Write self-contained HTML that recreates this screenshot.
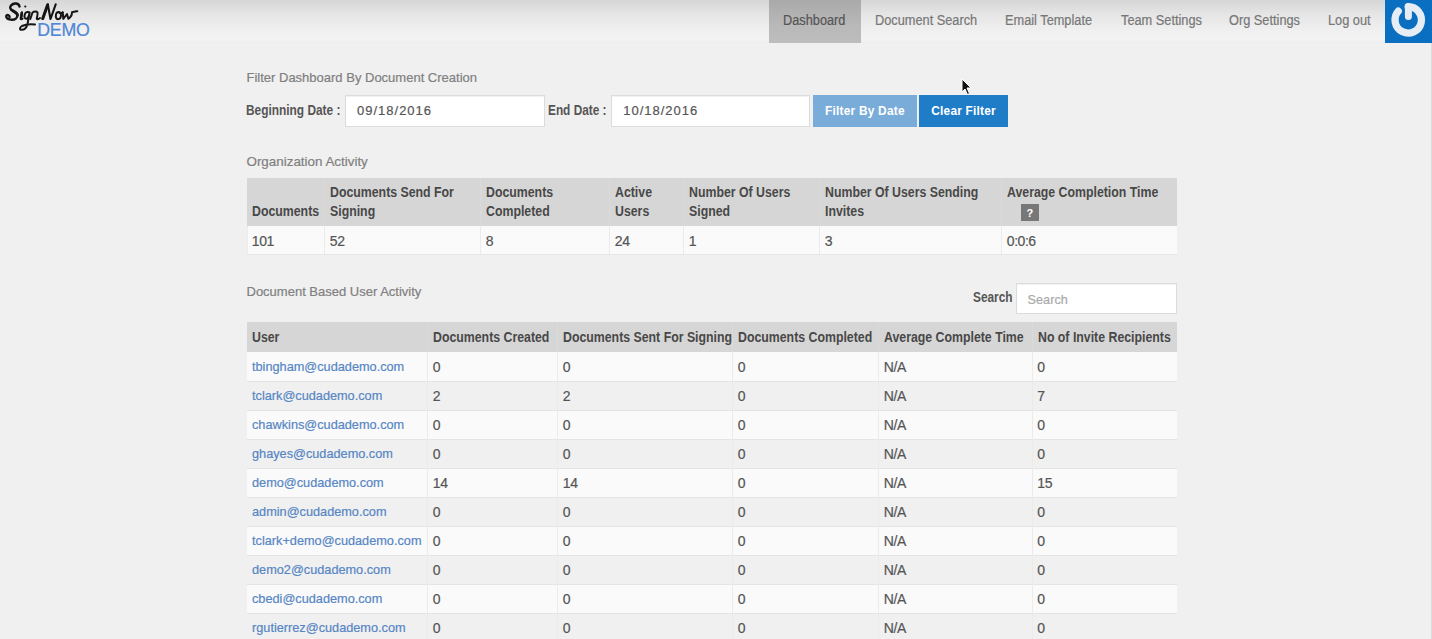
<!DOCTYPE html>
<html><head><meta charset="utf-8"><style>
html,body{margin:0;padding:0}
body{width:1432px;height:639px;overflow:hidden;background:#f0f0f0;position:relative;font-family:"Liberation Sans", sans-serif}
.t{position:absolute;white-space:nowrap;line-height:1.117;font-family:"Liberation Sans", sans-serif}
.r{position:absolute}
</style></head><body>
<div class="r" style="left:0;top:0;width:1432px;height:43px;background:linear-gradient(#d6d6d6 0%,#e6e6e6 35%,#f1f1f1 75%,#f3f3f3 90%,#eeeeee 100%)"></div>
<svg class="r" style="left:0;top:0" width="100" height="43" viewBox="0 0 100 43">
<g fill="none" stroke="#151515" stroke-linecap="round" stroke-linejoin="round">
<path d="M19.5 6.5 C19 4 17 3.3 15 3.5 C12 3.8 10 6 10.2 8 C10.5 10.5 17.5 12 17.5 15 C17.5 18 15 19.8 12 19.8 C9 19.8 6.3 18.5 6.2 16.3 C6.1 15 7.5 14.8 8.5 15.3 C9.5 15.8 9.8 17 9.5 17.2" stroke-width="2.4"/>
<path d="M22 12.3 L20.8 18.5 C20.7 19.3 21.5 19.5 22.5 18.7" stroke-width="2.0"/>
<circle cx="25.3" cy="6.5" r="1.1" fill="#151515" stroke="none"/>
<path d="M29.5 13 C28.5 11.5 26 11.8 25 13.8 C24 16 24.5 19 26.5 18.8 C28 18.6 29 16 29.7 12.5 L27.5 24 C26.8 27.5 24.5 29.7 21.5 29.8 C19.5 29.8 19.3 27.5 22 26 C25 24.5 30 24 35 24.5" stroke-width="2.0"/>
<path d="M30.3 19 L32.5 12.5 C34 11.5 36.5 11 37.5 12.5 C38 13.5 37 17 36.8 18.5 C36.7 19.5 38 19.5 40 18" stroke-width="2.0"/>
<path d="M42.5 19 L47.8 4.3 L50.5 19 L55.7 4.3" stroke-width="2.1"/>
<path d="M42.8 18.5 L47.6 5" stroke-width="3"/>
<path d="M11.5 10 C13.5 11.5 17.3 12.5 17.4 15.2" stroke-width="2.8"/>
<path d="M21.8 13 L21 18.5" stroke-width="2.6"/>
<path d="M58.5 12 C56 12 55 16 56.5 18.5 C58 20 60.5 19 61 16 C61.3 13.5 60 12 58.5 12 C60 13.5 61.5 13.5 62.8 12.5" stroke-width="2.0"/>
<path d="M62.7 12.3 L63.3 18.8 L67 14 L68.3 18.8 C70.5 17.5 72 14.5 72 12.3 C74 12 76 11.5 77.3 11.2" stroke-width="2.0"/>
</g>
</svg>
<div class="t" style="left:37.2px;top:20.69px;font-size:17.8px;font-weight:400;color:#5086d6;letter-spacing:-0.25px;-webkit-text-stroke:0.2px currentColor;">DEMO</div>
<div class="r" style="left:769px;top:0px;width:92px;height:43px;background:linear-gradient(#a9a9a9,#b9b9b9 60%,#bdbdbd);"></div>
<div class="t" style="left:783.1px;top:13.43px;font-size:14px;font-weight:400;color:#555;letter-spacing:0px;transform:scaleX(0.912);transform-origin:0 0;-webkit-text-stroke:0.2px currentColor;">Dashboard</div>
<div class="t" style="left:874.9px;top:13.43px;font-size:14px;font-weight:400;color:#777;letter-spacing:0px;transform:scaleX(0.912);transform-origin:0 0;-webkit-text-stroke:0.2px currentColor;">Document Search</div>
<div class="t" style="left:1005.4px;top:13.43px;font-size:14px;font-weight:400;color:#777;letter-spacing:0px;transform:scaleX(0.912);transform-origin:0 0;-webkit-text-stroke:0.2px currentColor;">Email Template</div>
<div class="t" style="left:1120.5px;top:13.43px;font-size:14px;font-weight:400;color:#777;letter-spacing:0px;transform:scaleX(0.912);transform-origin:0 0;-webkit-text-stroke:0.2px currentColor;">Team Settings</div>
<div class="t" style="left:1228.6999999999998px;top:13.43px;font-size:14px;font-weight:400;color:#777;letter-spacing:0px;transform:scaleX(0.912);transform-origin:0 0;-webkit-text-stroke:0.2px currentColor;">Org Settings</div>
<div class="t" style="left:1328.3px;top:13.43px;font-size:14px;font-weight:400;color:#777;letter-spacing:0px;transform:scaleX(0.912);transform-origin:0 0;-webkit-text-stroke:0.2px currentColor;">Log out</div>
<div class="r" style="left:1385px;top:0px;width:47px;height:43px;background:#0a6fc1;"></div>
<svg class="r" style="left:1385px;top:0" width="47" height="43" viewBox="0 0 47 43">
<path d="M13.3 11.2 A13.2 13.2 0 1 0 23.2 6.7" fill="none" stroke="#e6edf4" stroke-width="7.3" stroke-linecap="round"/>
<path d="M23.4 6.7 L23.4 16.5" fill="none" stroke="#e6edf4" stroke-width="7" stroke-linecap="round"/>
</svg>
<div class="r" style="left:1431px;top:43px;width:1px;height:596px;background:#dcdcdc;"></div>
<div class="t" style="left:246.5px;top:71.03px;font-size:13px;font-weight:400;color:#808080;letter-spacing:0px;-webkit-text-stroke:0.2px currentColor;">Filter Dashboard By Document Creation</div>
<div class="t" style="left:246.4px;top:102.63px;font-size:14px;font-weight:700;color:#555;letter-spacing:0px;transform:scaleX(0.849);transform-origin:0 0;">Beginning Date :</div>
<div class="r" style="left:344.5px;top:95px;width:200px;height:32px;background:#fff;box-sizing:border-box;border:1px solid #dcdcdc;box-shadow:inset 0 1px 1px rgba(0,0,0,.06)"></div>
<div class="t" style="left:357px;top:104.23px;font-size:13px;font-weight:400;color:#555;letter-spacing:1px;-webkit-text-stroke:0.2px currentColor;">09/18/2016</div>
<div class="t" style="left:547.8px;top:102.63px;font-size:14px;font-weight:700;color:#555;letter-spacing:0px;transform:scaleX(0.845);transform-origin:0 0;">End Date :</div>
<div class="r" style="left:610.5px;top:95px;width:199px;height:32px;background:#fff;box-sizing:border-box;border:1px solid #dcdcdc;box-shadow:inset 0 1px 1px rgba(0,0,0,.06)"></div>
<div class="t" style="left:623.2px;top:104.23px;font-size:13px;font-weight:400;color:#555;letter-spacing:1px;-webkit-text-stroke:0.2px currentColor;">10/18/2016</div>
<div class="r" style="left:812.5px;top:95px;width:104.5px;height:31.5px;background:#79acd8;"></div>
<div class="t" style="left:825px;top:105.43px;font-size:11.9px;font-weight:700;color:#fff;letter-spacing:0.22px;">Filter By Date</div>
<div class="r" style="left:919.3px;top:95px;width:88.7px;height:31.5px;background:#1f7dc8;"></div>
<div class="t" style="left:931.3px;top:105.43px;font-size:11.9px;font-weight:700;color:#fff;letter-spacing:0.2px;">Clear Filter</div>
<svg class="r" style="left:961px;top:77.5px" width="12" height="18" viewBox="0 0 12 18">
<path d="M1 1 L1 14 L4 11 L6.5 16.5 L8.5 15.5 L6 10 L10 10 Z" fill="#111" stroke="#fff" stroke-width="1"/>
</svg>
<div class="t" style="left:246.5px;top:155.07px;font-size:13.4px;font-weight:400;color:#808080;letter-spacing:0px;-webkit-text-stroke:0.2px currentColor;">Organization Activity</div>
<div class="r" style="left:246.5px;top:178px;width:930.5px;height:48.3px;background:#d6d6d6;"></div>
<div class="r" style="left:246.5px;top:226.3px;width:930.5px;height:28.7px;background:#fafafa;box-sizing:border-box;border-bottom:1px solid #e6e6e6;border-left:1px solid #ececec"></div>
<div class="t" style="left:252.0px;top:204.33px;font-size:14px;font-weight:700;color:#484848;letter-spacing:0px;transform:scaleX(0.88);transform-origin:0 0;">Documents</div>
<div class="t" style="left:251.8px;top:234.23px;font-size:14px;font-weight:400;color:#555;letter-spacing:-0.45px;-webkit-text-stroke:0.2px currentColor;">101</div>
<div class="r" style="left:324.0px;top:226.3px;width:1px;height:28px;background:#ebebeb;"></div>
<div class="r" style="left:324.0px;top:178px;width:1px;height:48.3px;background:#dadada;"></div>
<div class="t" style="left:330.0px;top:185.43px;font-size:14px;font-weight:700;color:#484848;letter-spacing:0px;transform:scaleX(0.88);transform-origin:0 0;">Documents Send For</div>
<div class="t" style="left:330.0px;top:204.33px;font-size:14px;font-weight:700;color:#484848;letter-spacing:0px;transform:scaleX(0.88);transform-origin:0 0;">Signing</div>
<div class="t" style="left:329.8px;top:234.23px;font-size:14px;font-weight:400;color:#555;letter-spacing:-0.45px;-webkit-text-stroke:0.2px currentColor;">52</div>
<div class="r" style="left:480.0px;top:226.3px;width:1px;height:28px;background:#ebebeb;"></div>
<div class="r" style="left:480.0px;top:178px;width:1px;height:48.3px;background:#dadada;"></div>
<div class="t" style="left:486.0px;top:185.43px;font-size:14px;font-weight:700;color:#484848;letter-spacing:0px;transform:scaleX(0.88);transform-origin:0 0;">Documents</div>
<div class="t" style="left:486.0px;top:204.33px;font-size:14px;font-weight:700;color:#484848;letter-spacing:0px;transform:scaleX(0.88);transform-origin:0 0;">Completed</div>
<div class="t" style="left:485.8px;top:234.23px;font-size:14px;font-weight:400;color:#555;letter-spacing:-0.45px;-webkit-text-stroke:0.2px currentColor;">8</div>
<div class="r" style="left:609.0px;top:226.3px;width:1px;height:28px;background:#ebebeb;"></div>
<div class="r" style="left:609.0px;top:178px;width:1px;height:48.3px;background:#dadada;"></div>
<div class="t" style="left:615.0px;top:185.43px;font-size:14px;font-weight:700;color:#484848;letter-spacing:0px;transform:scaleX(0.88);transform-origin:0 0;">Active</div>
<div class="t" style="left:615.0px;top:204.33px;font-size:14px;font-weight:700;color:#484848;letter-spacing:0px;transform:scaleX(0.88);transform-origin:0 0;">Users</div>
<div class="t" style="left:614.8px;top:234.23px;font-size:14px;font-weight:400;color:#555;letter-spacing:-0.45px;-webkit-text-stroke:0.2px currentColor;">24</div>
<div class="r" style="left:683.0px;top:226.3px;width:1px;height:28px;background:#ebebeb;"></div>
<div class="r" style="left:683.0px;top:178px;width:1px;height:48.3px;background:#dadada;"></div>
<div class="t" style="left:689.0px;top:185.43px;font-size:14px;font-weight:700;color:#484848;letter-spacing:0px;transform:scaleX(0.88);transform-origin:0 0;">Number Of Users</div>
<div class="t" style="left:689.0px;top:204.33px;font-size:14px;font-weight:700;color:#484848;letter-spacing:0px;transform:scaleX(0.88);transform-origin:0 0;">Signed</div>
<div class="t" style="left:688.8px;top:234.23px;font-size:14px;font-weight:400;color:#555;letter-spacing:-0.45px;-webkit-text-stroke:0.2px currentColor;">1</div>
<div class="r" style="left:819.0px;top:226.3px;width:1px;height:28px;background:#ebebeb;"></div>
<div class="r" style="left:819.0px;top:178px;width:1px;height:48.3px;background:#dadada;"></div>
<div class="t" style="left:825.0px;top:185.43px;font-size:14px;font-weight:700;color:#484848;letter-spacing:0px;transform:scaleX(0.88);transform-origin:0 0;">Number Of Users Sending</div>
<div class="t" style="left:825.0px;top:204.33px;font-size:14px;font-weight:700;color:#484848;letter-spacing:0px;transform:scaleX(0.88);transform-origin:0 0;">Invites</div>
<div class="t" style="left:824.8px;top:234.23px;font-size:14px;font-weight:400;color:#555;letter-spacing:-0.45px;-webkit-text-stroke:0.2px currentColor;">3</div>
<div class="r" style="left:1001.0px;top:226.3px;width:1px;height:28px;background:#ebebeb;"></div>
<div class="r" style="left:1001.0px;top:178px;width:1px;height:48.3px;background:#dadada;"></div>
<div class="t" style="left:1007.0px;top:185.43px;font-size:14px;font-weight:700;color:#484848;letter-spacing:0px;transform:scaleX(0.88);transform-origin:0 0;">Average Completion Time</div>
<div class="t" style="left:1006.8px;top:234.23px;font-size:14px;font-weight:400;color:#555;letter-spacing:-0.45px;-webkit-text-stroke:0.2px currentColor;">0:0:6</div>
<div class="r" style="left:1021px;top:204px;width:18px;height:16.5px;background:#777;"></div>
<div class="t" style="left:1026.5px;top:206.54px;font-size:11px;font-weight:700;color:#fff;letter-spacing:0px;">?</div>
<div class="t" style="left:246.5px;top:285.04px;font-size:13px;font-weight:400;color:#808080;letter-spacing:0px;-webkit-text-stroke:0.2px currentColor;">Document Based User Activity</div>
<div class="t" style="left:973px;top:290.03px;font-size:14px;font-weight:700;color:#555;letter-spacing:0px;transform:scaleX(0.848);transform-origin:0 0;">Search</div>
<div class="r" style="left:1016.3px;top:283px;width:161px;height:31px;background:#fff;box-sizing:border-box;border:1px solid #dcdcdc;box-shadow:inset 0 1px 1px rgba(0,0,0,.06)"></div>
<div class="t" style="left:1027.6px;top:293.01px;font-size:12.7px;font-weight:400;color:#aaa;letter-spacing:0px;-webkit-text-stroke:0.2px currentColor;">Search</div>
<div class="r" style="left:246.5px;top:322px;width:930.5px;height:30px;background:#d6d6d6;"></div>
<div class="r" style="left:427.0px;top:322px;width:1px;height:30px;background:#dadada;"></div>
<div class="r" style="left:557.0px;top:322px;width:1px;height:30px;background:#dadada;"></div>
<div class="r" style="left:732.0px;top:322px;width:1px;height:30px;background:#dadada;"></div>
<div class="r" style="left:878.0px;top:322px;width:1px;height:30px;background:#dadada;"></div>
<div class="r" style="left:1031.5px;top:322px;width:1px;height:30px;background:#dadada;"></div>
<div class="t" style="left:252.0px;top:329.73px;font-size:14px;font-weight:700;color:#484848;letter-spacing:0px;transform:scaleX(0.88);transform-origin:0 0;">User</div>
<div class="t" style="left:433.0px;top:329.73px;font-size:14px;font-weight:700;color:#484848;letter-spacing:0px;transform:scaleX(0.88);transform-origin:0 0;">Documents Created</div>
<div class="t" style="left:563.0px;top:329.73px;font-size:14px;font-weight:700;color:#484848;letter-spacing:0px;transform:scaleX(0.88);transform-origin:0 0;">Documents Sent For Signing</div>
<div class="t" style="left:738.0px;top:329.73px;font-size:14px;font-weight:700;color:#484848;letter-spacing:0px;transform:scaleX(0.88);transform-origin:0 0;">Documents Completed</div>
<div class="t" style="left:884.0px;top:329.73px;font-size:14px;font-weight:700;color:#484848;letter-spacing:0px;transform:scaleX(0.88);transform-origin:0 0;">Average Complete Time</div>
<div class="t" style="left:1037.5px;top:329.73px;font-size:14px;font-weight:700;color:#484848;letter-spacing:0px;transform:scaleX(0.88);transform-origin:0 0;">No of Invite Recipients</div>
<div class="r" style="left:246.5px;top:352px;width:930.5px;height:29px;background:#fafafa;"></div>
<div class="r" style="left:246.5px;top:381px;width:930.5px;height:29px;background:#f0f0f0;"></div>
<div class="r" style="left:246.5px;top:410px;width:930.5px;height:29px;background:#fafafa;"></div>
<div class="r" style="left:246.5px;top:439px;width:930.5px;height:29px;background:#f0f0f0;"></div>
<div class="r" style="left:246.5px;top:468px;width:930.5px;height:29px;background:#fafafa;"></div>
<div class="r" style="left:246.5px;top:497px;width:930.5px;height:29px;background:#f0f0f0;"></div>
<div class="r" style="left:246.5px;top:526px;width:930.5px;height:29px;background:#fafafa;"></div>
<div class="r" style="left:246.5px;top:555px;width:930.5px;height:29px;background:#f0f0f0;"></div>
<div class="r" style="left:246.5px;top:584px;width:930.5px;height:29px;background:#fafafa;"></div>
<div class="r" style="left:246.5px;top:613px;width:930.5px;height:29px;background:#f0f0f0;"></div>
<div class="r" style="left:246.5px;top:381px;width:930.5px;height:1px;background:#e4e4e4;"></div>
<div class="r" style="left:427.0px;top:352px;width:1px;height:29px;background:#ebebeb;"></div>
<div class="r" style="left:557.0px;top:352px;width:1px;height:29px;background:#ebebeb;"></div>
<div class="r" style="left:732.0px;top:352px;width:1px;height:29px;background:#ebebeb;"></div>
<div class="r" style="left:878.0px;top:352px;width:1px;height:29px;background:#ebebeb;"></div>
<div class="r" style="left:1031.5px;top:352px;width:1px;height:29px;background:#ebebeb;"></div>
<div class="t" style="left:252.0px;top:360.48px;font-size:12.73px;font-weight:400;color:#5686c4;letter-spacing:0px;-webkit-text-stroke:0.2px currentColor;">tbingham@cudademo.com</div>
<div class="t" style="left:432.8px;top:360.23px;font-size:14px;font-weight:400;color:#555;letter-spacing:-0.45px;-webkit-text-stroke:0.2px currentColor;">0</div>
<div class="t" style="left:562.8px;top:360.23px;font-size:14px;font-weight:400;color:#555;letter-spacing:-0.45px;-webkit-text-stroke:0.2px currentColor;">0</div>
<div class="t" style="left:737.8px;top:360.23px;font-size:14px;font-weight:400;color:#555;letter-spacing:-0.45px;-webkit-text-stroke:0.2px currentColor;">0</div>
<div class="t" style="left:883.8px;top:360.23px;font-size:14px;font-weight:400;color:#555;letter-spacing:-0.45px;-webkit-text-stroke:0.2px currentColor;">N/A</div>
<div class="t" style="left:1037.3px;top:360.23px;font-size:14px;font-weight:400;color:#555;letter-spacing:-0.45px;-webkit-text-stroke:0.2px currentColor;">0</div>
<div class="r" style="left:246.5px;top:410px;width:930.5px;height:1px;background:#e4e4e4;"></div>
<div class="r" style="left:427.0px;top:381px;width:1px;height:29px;background:#ebebeb;"></div>
<div class="r" style="left:557.0px;top:381px;width:1px;height:29px;background:#ebebeb;"></div>
<div class="r" style="left:732.0px;top:381px;width:1px;height:29px;background:#ebebeb;"></div>
<div class="r" style="left:878.0px;top:381px;width:1px;height:29px;background:#ebebeb;"></div>
<div class="r" style="left:1031.5px;top:381px;width:1px;height:29px;background:#ebebeb;"></div>
<div class="t" style="left:252.0px;top:389.48px;font-size:12.73px;font-weight:400;color:#5686c4;letter-spacing:0px;-webkit-text-stroke:0.2px currentColor;">tclark@cudademo.com</div>
<div class="t" style="left:432.8px;top:389.23px;font-size:14px;font-weight:400;color:#555;letter-spacing:-0.45px;-webkit-text-stroke:0.2px currentColor;">2</div>
<div class="t" style="left:562.8px;top:389.23px;font-size:14px;font-weight:400;color:#555;letter-spacing:-0.45px;-webkit-text-stroke:0.2px currentColor;">2</div>
<div class="t" style="left:737.8px;top:389.23px;font-size:14px;font-weight:400;color:#555;letter-spacing:-0.45px;-webkit-text-stroke:0.2px currentColor;">0</div>
<div class="t" style="left:883.8px;top:389.23px;font-size:14px;font-weight:400;color:#555;letter-spacing:-0.45px;-webkit-text-stroke:0.2px currentColor;">N/A</div>
<div class="t" style="left:1037.3px;top:389.23px;font-size:14px;font-weight:400;color:#555;letter-spacing:-0.45px;-webkit-text-stroke:0.2px currentColor;">7</div>
<div class="r" style="left:246.5px;top:439px;width:930.5px;height:1px;background:#e4e4e4;"></div>
<div class="r" style="left:427.0px;top:410px;width:1px;height:29px;background:#ebebeb;"></div>
<div class="r" style="left:557.0px;top:410px;width:1px;height:29px;background:#ebebeb;"></div>
<div class="r" style="left:732.0px;top:410px;width:1px;height:29px;background:#ebebeb;"></div>
<div class="r" style="left:878.0px;top:410px;width:1px;height:29px;background:#ebebeb;"></div>
<div class="r" style="left:1031.5px;top:410px;width:1px;height:29px;background:#ebebeb;"></div>
<div class="t" style="left:252.0px;top:418.48px;font-size:12.73px;font-weight:400;color:#5686c4;letter-spacing:0px;-webkit-text-stroke:0.2px currentColor;">chawkins@cudademo.com</div>
<div class="t" style="left:432.8px;top:418.23px;font-size:14px;font-weight:400;color:#555;letter-spacing:-0.45px;-webkit-text-stroke:0.2px currentColor;">0</div>
<div class="t" style="left:562.8px;top:418.23px;font-size:14px;font-weight:400;color:#555;letter-spacing:-0.45px;-webkit-text-stroke:0.2px currentColor;">0</div>
<div class="t" style="left:737.8px;top:418.23px;font-size:14px;font-weight:400;color:#555;letter-spacing:-0.45px;-webkit-text-stroke:0.2px currentColor;">0</div>
<div class="t" style="left:883.8px;top:418.23px;font-size:14px;font-weight:400;color:#555;letter-spacing:-0.45px;-webkit-text-stroke:0.2px currentColor;">N/A</div>
<div class="t" style="left:1037.3px;top:418.23px;font-size:14px;font-weight:400;color:#555;letter-spacing:-0.45px;-webkit-text-stroke:0.2px currentColor;">0</div>
<div class="r" style="left:246.5px;top:468px;width:930.5px;height:1px;background:#e4e4e4;"></div>
<div class="r" style="left:427.0px;top:439px;width:1px;height:29px;background:#ebebeb;"></div>
<div class="r" style="left:557.0px;top:439px;width:1px;height:29px;background:#ebebeb;"></div>
<div class="r" style="left:732.0px;top:439px;width:1px;height:29px;background:#ebebeb;"></div>
<div class="r" style="left:878.0px;top:439px;width:1px;height:29px;background:#ebebeb;"></div>
<div class="r" style="left:1031.5px;top:439px;width:1px;height:29px;background:#ebebeb;"></div>
<div class="t" style="left:252.0px;top:447.48px;font-size:12.73px;font-weight:400;color:#5686c4;letter-spacing:0px;-webkit-text-stroke:0.2px currentColor;">ghayes@cudademo.com</div>
<div class="t" style="left:432.8px;top:447.23px;font-size:14px;font-weight:400;color:#555;letter-spacing:-0.45px;-webkit-text-stroke:0.2px currentColor;">0</div>
<div class="t" style="left:562.8px;top:447.23px;font-size:14px;font-weight:400;color:#555;letter-spacing:-0.45px;-webkit-text-stroke:0.2px currentColor;">0</div>
<div class="t" style="left:737.8px;top:447.23px;font-size:14px;font-weight:400;color:#555;letter-spacing:-0.45px;-webkit-text-stroke:0.2px currentColor;">0</div>
<div class="t" style="left:883.8px;top:447.23px;font-size:14px;font-weight:400;color:#555;letter-spacing:-0.45px;-webkit-text-stroke:0.2px currentColor;">N/A</div>
<div class="t" style="left:1037.3px;top:447.23px;font-size:14px;font-weight:400;color:#555;letter-spacing:-0.45px;-webkit-text-stroke:0.2px currentColor;">0</div>
<div class="r" style="left:246.5px;top:497px;width:930.5px;height:1px;background:#e4e4e4;"></div>
<div class="r" style="left:427.0px;top:468px;width:1px;height:29px;background:#ebebeb;"></div>
<div class="r" style="left:557.0px;top:468px;width:1px;height:29px;background:#ebebeb;"></div>
<div class="r" style="left:732.0px;top:468px;width:1px;height:29px;background:#ebebeb;"></div>
<div class="r" style="left:878.0px;top:468px;width:1px;height:29px;background:#ebebeb;"></div>
<div class="r" style="left:1031.5px;top:468px;width:1px;height:29px;background:#ebebeb;"></div>
<div class="t" style="left:252.0px;top:476.48px;font-size:12.73px;font-weight:400;color:#5686c4;letter-spacing:0px;-webkit-text-stroke:0.2px currentColor;">demo@cudademo.com</div>
<div class="t" style="left:432.8px;top:476.23px;font-size:14px;font-weight:400;color:#555;letter-spacing:-0.45px;-webkit-text-stroke:0.2px currentColor;">14</div>
<div class="t" style="left:562.8px;top:476.23px;font-size:14px;font-weight:400;color:#555;letter-spacing:-0.45px;-webkit-text-stroke:0.2px currentColor;">14</div>
<div class="t" style="left:737.8px;top:476.23px;font-size:14px;font-weight:400;color:#555;letter-spacing:-0.45px;-webkit-text-stroke:0.2px currentColor;">0</div>
<div class="t" style="left:883.8px;top:476.23px;font-size:14px;font-weight:400;color:#555;letter-spacing:-0.45px;-webkit-text-stroke:0.2px currentColor;">N/A</div>
<div class="t" style="left:1037.3px;top:476.23px;font-size:14px;font-weight:400;color:#555;letter-spacing:-0.45px;-webkit-text-stroke:0.2px currentColor;">15</div>
<div class="r" style="left:246.5px;top:526px;width:930.5px;height:1px;background:#e4e4e4;"></div>
<div class="r" style="left:427.0px;top:497px;width:1px;height:29px;background:#ebebeb;"></div>
<div class="r" style="left:557.0px;top:497px;width:1px;height:29px;background:#ebebeb;"></div>
<div class="r" style="left:732.0px;top:497px;width:1px;height:29px;background:#ebebeb;"></div>
<div class="r" style="left:878.0px;top:497px;width:1px;height:29px;background:#ebebeb;"></div>
<div class="r" style="left:1031.5px;top:497px;width:1px;height:29px;background:#ebebeb;"></div>
<div class="t" style="left:252.0px;top:505.48px;font-size:12.73px;font-weight:400;color:#5686c4;letter-spacing:0px;-webkit-text-stroke:0.2px currentColor;">admin@cudademo.com</div>
<div class="t" style="left:432.8px;top:505.23px;font-size:14px;font-weight:400;color:#555;letter-spacing:-0.45px;-webkit-text-stroke:0.2px currentColor;">0</div>
<div class="t" style="left:562.8px;top:505.23px;font-size:14px;font-weight:400;color:#555;letter-spacing:-0.45px;-webkit-text-stroke:0.2px currentColor;">0</div>
<div class="t" style="left:737.8px;top:505.23px;font-size:14px;font-weight:400;color:#555;letter-spacing:-0.45px;-webkit-text-stroke:0.2px currentColor;">0</div>
<div class="t" style="left:883.8px;top:505.23px;font-size:14px;font-weight:400;color:#555;letter-spacing:-0.45px;-webkit-text-stroke:0.2px currentColor;">N/A</div>
<div class="t" style="left:1037.3px;top:505.23px;font-size:14px;font-weight:400;color:#555;letter-spacing:-0.45px;-webkit-text-stroke:0.2px currentColor;">0</div>
<div class="r" style="left:246.5px;top:555px;width:930.5px;height:1px;background:#e4e4e4;"></div>
<div class="r" style="left:427.0px;top:526px;width:1px;height:29px;background:#ebebeb;"></div>
<div class="r" style="left:557.0px;top:526px;width:1px;height:29px;background:#ebebeb;"></div>
<div class="r" style="left:732.0px;top:526px;width:1px;height:29px;background:#ebebeb;"></div>
<div class="r" style="left:878.0px;top:526px;width:1px;height:29px;background:#ebebeb;"></div>
<div class="r" style="left:1031.5px;top:526px;width:1px;height:29px;background:#ebebeb;"></div>
<div class="t" style="left:252.0px;top:534.48px;font-size:12.73px;font-weight:400;color:#5686c4;letter-spacing:0px;-webkit-text-stroke:0.2px currentColor;">tclark+demo@cudademo.com</div>
<div class="t" style="left:432.8px;top:534.23px;font-size:14px;font-weight:400;color:#555;letter-spacing:-0.45px;-webkit-text-stroke:0.2px currentColor;">0</div>
<div class="t" style="left:562.8px;top:534.23px;font-size:14px;font-weight:400;color:#555;letter-spacing:-0.45px;-webkit-text-stroke:0.2px currentColor;">0</div>
<div class="t" style="left:737.8px;top:534.23px;font-size:14px;font-weight:400;color:#555;letter-spacing:-0.45px;-webkit-text-stroke:0.2px currentColor;">0</div>
<div class="t" style="left:883.8px;top:534.23px;font-size:14px;font-weight:400;color:#555;letter-spacing:-0.45px;-webkit-text-stroke:0.2px currentColor;">N/A</div>
<div class="t" style="left:1037.3px;top:534.23px;font-size:14px;font-weight:400;color:#555;letter-spacing:-0.45px;-webkit-text-stroke:0.2px currentColor;">0</div>
<div class="r" style="left:246.5px;top:584px;width:930.5px;height:1px;background:#e4e4e4;"></div>
<div class="r" style="left:427.0px;top:555px;width:1px;height:29px;background:#ebebeb;"></div>
<div class="r" style="left:557.0px;top:555px;width:1px;height:29px;background:#ebebeb;"></div>
<div class="r" style="left:732.0px;top:555px;width:1px;height:29px;background:#ebebeb;"></div>
<div class="r" style="left:878.0px;top:555px;width:1px;height:29px;background:#ebebeb;"></div>
<div class="r" style="left:1031.5px;top:555px;width:1px;height:29px;background:#ebebeb;"></div>
<div class="t" style="left:252.0px;top:563.48px;font-size:12.73px;font-weight:400;color:#5686c4;letter-spacing:0px;-webkit-text-stroke:0.2px currentColor;">demo2@cudademo.com</div>
<div class="t" style="left:432.8px;top:563.23px;font-size:14px;font-weight:400;color:#555;letter-spacing:-0.45px;-webkit-text-stroke:0.2px currentColor;">0</div>
<div class="t" style="left:562.8px;top:563.23px;font-size:14px;font-weight:400;color:#555;letter-spacing:-0.45px;-webkit-text-stroke:0.2px currentColor;">0</div>
<div class="t" style="left:737.8px;top:563.23px;font-size:14px;font-weight:400;color:#555;letter-spacing:-0.45px;-webkit-text-stroke:0.2px currentColor;">0</div>
<div class="t" style="left:883.8px;top:563.23px;font-size:14px;font-weight:400;color:#555;letter-spacing:-0.45px;-webkit-text-stroke:0.2px currentColor;">N/A</div>
<div class="t" style="left:1037.3px;top:563.23px;font-size:14px;font-weight:400;color:#555;letter-spacing:-0.45px;-webkit-text-stroke:0.2px currentColor;">0</div>
<div class="r" style="left:246.5px;top:613px;width:930.5px;height:1px;background:#e4e4e4;"></div>
<div class="r" style="left:427.0px;top:584px;width:1px;height:29px;background:#ebebeb;"></div>
<div class="r" style="left:557.0px;top:584px;width:1px;height:29px;background:#ebebeb;"></div>
<div class="r" style="left:732.0px;top:584px;width:1px;height:29px;background:#ebebeb;"></div>
<div class="r" style="left:878.0px;top:584px;width:1px;height:29px;background:#ebebeb;"></div>
<div class="r" style="left:1031.5px;top:584px;width:1px;height:29px;background:#ebebeb;"></div>
<div class="t" style="left:252.0px;top:592.48px;font-size:12.73px;font-weight:400;color:#5686c4;letter-spacing:0px;-webkit-text-stroke:0.2px currentColor;">cbedi@cudademo.com</div>
<div class="t" style="left:432.8px;top:592.23px;font-size:14px;font-weight:400;color:#555;letter-spacing:-0.45px;-webkit-text-stroke:0.2px currentColor;">0</div>
<div class="t" style="left:562.8px;top:592.23px;font-size:14px;font-weight:400;color:#555;letter-spacing:-0.45px;-webkit-text-stroke:0.2px currentColor;">0</div>
<div class="t" style="left:737.8px;top:592.23px;font-size:14px;font-weight:400;color:#555;letter-spacing:-0.45px;-webkit-text-stroke:0.2px currentColor;">0</div>
<div class="t" style="left:883.8px;top:592.23px;font-size:14px;font-weight:400;color:#555;letter-spacing:-0.45px;-webkit-text-stroke:0.2px currentColor;">N/A</div>
<div class="t" style="left:1037.3px;top:592.23px;font-size:14px;font-weight:400;color:#555;letter-spacing:-0.45px;-webkit-text-stroke:0.2px currentColor;">0</div>
<div class="r" style="left:246.5px;top:642px;width:930.5px;height:1px;background:#e4e4e4;"></div>
<div class="r" style="left:427.0px;top:613px;width:1px;height:29px;background:#ebebeb;"></div>
<div class="r" style="left:557.0px;top:613px;width:1px;height:29px;background:#ebebeb;"></div>
<div class="r" style="left:732.0px;top:613px;width:1px;height:29px;background:#ebebeb;"></div>
<div class="r" style="left:878.0px;top:613px;width:1px;height:29px;background:#ebebeb;"></div>
<div class="r" style="left:1031.5px;top:613px;width:1px;height:29px;background:#ebebeb;"></div>
<div class="t" style="left:252.0px;top:621.48px;font-size:12.73px;font-weight:400;color:#5686c4;letter-spacing:0px;-webkit-text-stroke:0.2px currentColor;">rgutierrez@cudademo.com</div>
<div class="t" style="left:432.8px;top:621.23px;font-size:14px;font-weight:400;color:#555;letter-spacing:-0.45px;-webkit-text-stroke:0.2px currentColor;">0</div>
<div class="t" style="left:562.8px;top:621.23px;font-size:14px;font-weight:400;color:#555;letter-spacing:-0.45px;-webkit-text-stroke:0.2px currentColor;">0</div>
<div class="t" style="left:737.8px;top:621.23px;font-size:14px;font-weight:400;color:#555;letter-spacing:-0.45px;-webkit-text-stroke:0.2px currentColor;">0</div>
<div class="t" style="left:883.8px;top:621.23px;font-size:14px;font-weight:400;color:#555;letter-spacing:-0.45px;-webkit-text-stroke:0.2px currentColor;">N/A</div>
<div class="t" style="left:1037.3px;top:621.23px;font-size:14px;font-weight:400;color:#555;letter-spacing:-0.45px;-webkit-text-stroke:0.2px currentColor;">0</div>
</body></html>
